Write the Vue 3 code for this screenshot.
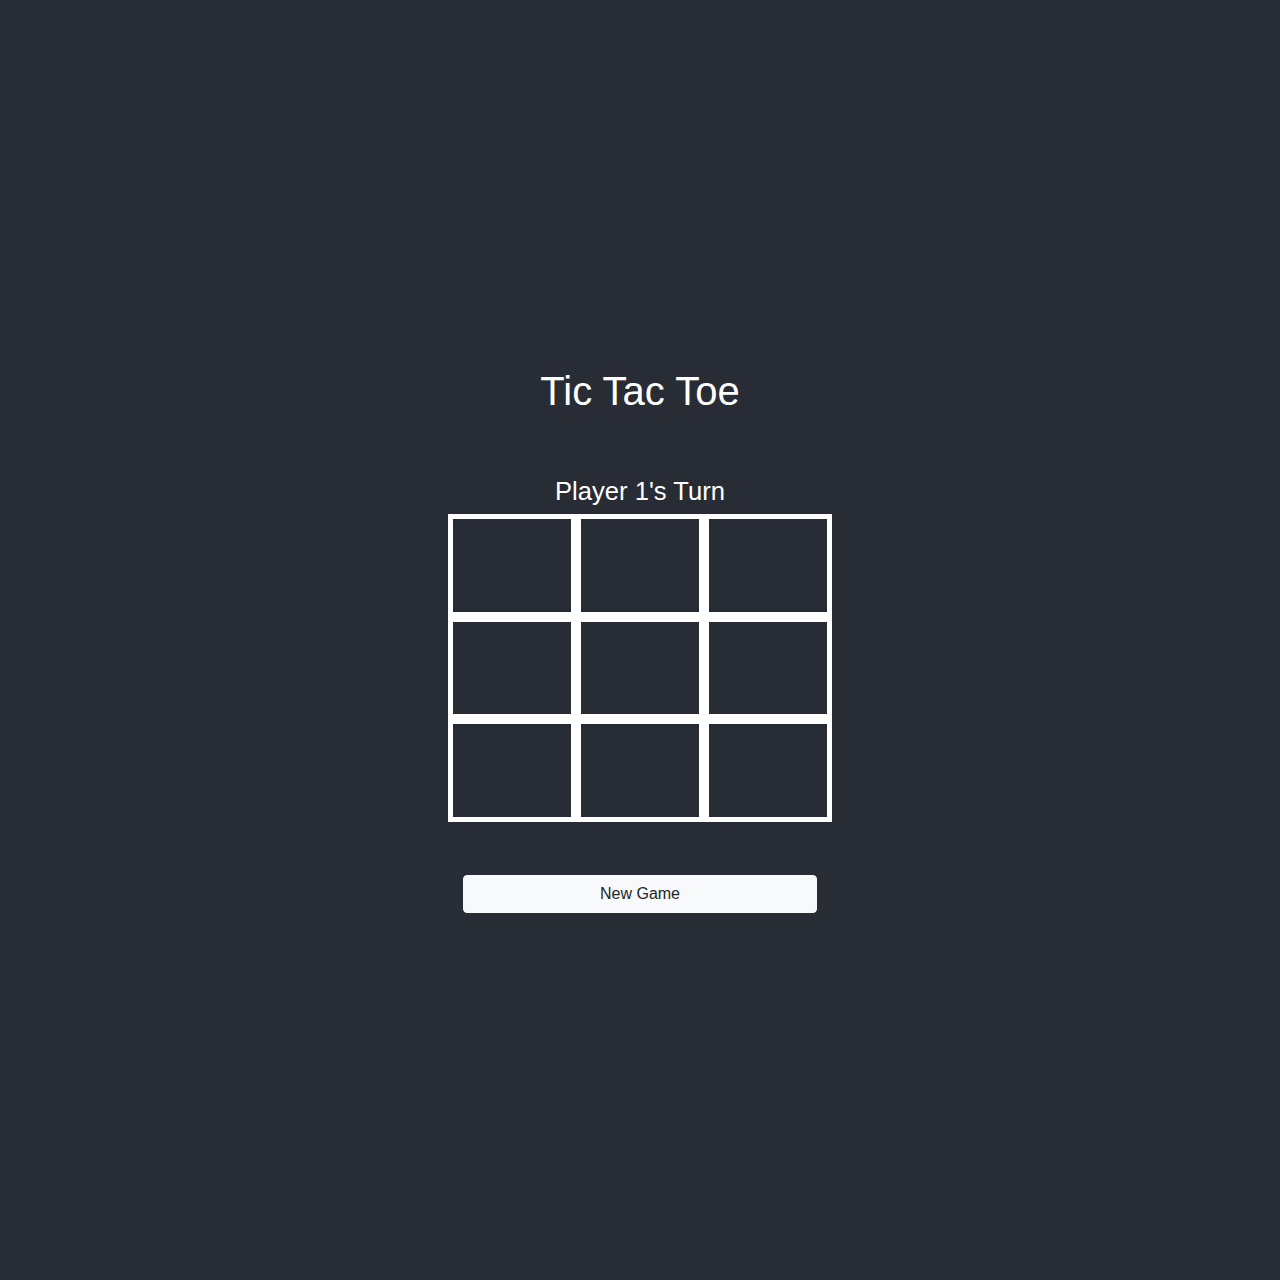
<script setup>
import { computed, ref } from 'vue'

const cells = ref(Array(9).fill(''))
const player = ref(1)

const lines = [
  [0, 1, 2], [3, 4, 5], [6, 7, 8],
  [0, 3, 6], [1, 4, 7], [2, 5, 8],
  [0, 4, 8], [2, 4, 6],
]

const winner = computed(() => {
  const line = lines.find(([a, b, c]) =>
    cells.value[a] && cells.value[a] === cells.value[b] && cells.value[a] === cells.value[c])
  return line ? (cells.value[line[0]] === 'X' ? 1 : 2) : 0
})

const status = computed(() => {
  if (winner.value) return `Player ${winner.value} Wins`
  if (cells.value.every(Boolean)) return 'Draw'
  return `Player ${player.value}'s Turn`
})

function play(index) {
  if (cells.value[index] || winner.value) return
  cells.value[index] = player.value === 1 ? 'X' : 'O'
  player.value = player.value === 1 ? 2 : 1
}

function newGame() {
  cells.value = Array(9).fill('')
  player.value = 1
}
</script>

<template>
  <main class="app">
    <h1 class="title">Tic Tac Toe</h1>
    <p class="status" aria-live="polite">{{ status }}</p>
    <div class="board">
      <button
        v-for="(cell, index) in cells"
        :key="index"
        class="cell"
        type="button"
        :aria-label="`Square ${index + 1} ${cell}`"
        @click="play(index)"
      >{{ cell }}</button>
    </div>
    <div class="actions">
      <button class="new-game" type="button" @click="newGame">New Game</button>
    </div>
  </main>
</template>

<style>
body {
  margin: 0;
  background: #282c34;
}
</style>

<style scoped>
.app {
  box-sizing: border-box;
  min-height: 100vh;
  display: flex;
  flex-direction: column;
  align-items: center;
  justify-content: center;
  color: #fff;
  font-family: "Liberation Sans", Arial, sans-serif;
}

.title {
  margin: 0 0 60px;
  font-size: 40px;
  line-height: 48px;
  font-weight: 400;
}

.status {
  margin: 0 0 7px;
  font-size: 2vw;
  line-height: 32px;
}

.board {
  width: 30vw;
  height: 24vw;
  display: grid;
  grid-template-columns: repeat(3, 1fr);
  grid-template-rows: repeat(3, 1fr);
}

.cell {
  min-width: 0;
  padding: 0;
  border: 5px solid #fff;
  border-radius: 0;
  background: transparent;
  color: #fff;
  font: inherit;
  font-size: 40px;
  cursor: pointer;
}

.actions {
  box-sizing: border-box;
  width: 30vw;
  margin-top: 53px;
  padding: 0 15px;
}

.new-game {
  width: 100%;
  padding: 6px 12px;
  border: 1px solid #f8f9fa;
  border-radius: 4px;
  background: #f8f9fa;
  color: #212529;
  font: inherit;
  font-size: 16px;
  line-height: 24px;
  cursor: pointer;
}
</style>
